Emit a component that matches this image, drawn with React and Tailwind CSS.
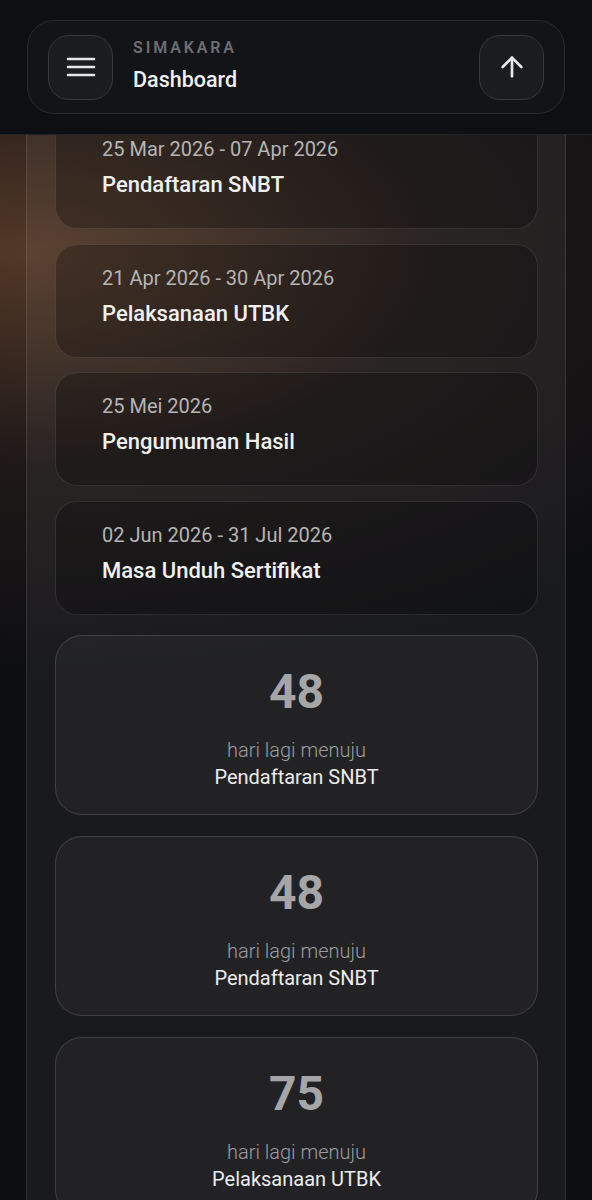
import React from 'react';
import { ArrowUp } from 'lucide-react';

const timeline = [
    { date: '25 Mar 2026 - 07 Apr 2026', title: 'Pendaftaran SNBT' },
    { date: '21 Apr 2026 - 30 Apr 2026', title: 'Pelaksanaan UTBK' },
    { date: '25 Mei 2026', title: 'Pengumuman Hasil' },
    { date: '02 Jun 2026 - 31 Jul 2026', title: 'Masa Unduh Sertifikat' },
];

const countdowns = [
    { days: 48, title: 'Pendaftaran SNBT' },
    { days: 48, title: 'Pendaftaran SNBT' },
    { days: 75, title: 'Pelaksanaan UTBK' },
];

const MenuIcon = () => (
    <svg width="30" height="24" viewBox="0 0 30 24" fill="none" stroke="#e6e6e8" strokeWidth="2.6" strokeLinecap="round">
        <path d="M2 4h26" />
        <path d="M2 12h26" />
        <path d="M2 20h26" />
    </svg>
);

const App = () => {
    return (
        <div className="relative min-h-screen bg-[#0d0e11] font-['Roboto',sans-serif] overflow-hidden">
            {/* Background glow */}
            <div className="absolute inset-0 bg-[radial-gradient(ellipse_140%_34%_at_5%_20%,rgba(112,74,48,0.7),rgba(70,48,40,0.3)_50%,transparent)]"></div>

            {/* Header */}
            <header className="fixed top-0 inset-x-0 z-10 bg-[#0e0f12] border-b border-[#232428] px-[27px] py-[20px]">
                <div className="h-[94px] flex items-center justify-between rounded-[27px] border border-[#2a2b30] bg-[#131418] px-[20px]">
                    <div className="flex items-center gap-[20px]">
                        <button className="w-[65px] h-[65px] rounded-[21px] border border-[#37383d] bg-[#1b1c20] flex items-center justify-center">
                            <MenuIcon />
                        </button>
                        <div className="mb-[2px]">
                            <p className="text-[16px] leading-[20px] font-semibold tracking-[0.18em] text-[#6c6e74]">SIMAKARA</p>
                            <h1 className="mt-[8px] text-[21.5px] leading-[28px] font-medium text-[#f2f2f4]">Dashboard</h1>
                        </div>
                    </div>
                    <button className="w-[65px] h-[65px] rounded-[21px] border border-[#37383d] bg-[#1b1c20] flex items-center justify-center text-[#e6e6e8]">
                        <ArrowUp size={32} strokeWidth={2} />
                    </button>
                </div>
            </header>

            {/* Panel */}
            <main className="relative mx-[26px] border-x border-white/10 bg-white/[0.05] pt-[115px] pb-10 pl-[28px] pr-[27px]">
                <div className="flex flex-col gap-[14.5px]">
                    {timeline.map((item, i) => (
                        <div key={i} className="h-[114px] rounded-[22px] border border-white/10 bg-black/25 pl-[46px] pt-[19px]">
                            <p className="text-[20px] leading-[28px] text-[#b5b4b6]">{item.date}</p>
                            <p className="mt-[8px] text-[22px] leading-[28px] font-medium text-[#f1f1f2]">{item.title}</p>
                        </div>
                    ))}
                </div>

                <div className="mt-[20px] flex flex-col gap-[21px]">
                    {countdowns.map((c, i) => (
                        <div key={i} className="rounded-[27px] border border-white/[0.13] bg-white/[0.04] pt-[32px] pb-[23px] text-center">
                            <p className="text-[48px] leading-[48px] font-bold text-[#a6a6a9]">{c.days}</p>
                            <p className="mt-[21px] text-[20px] leading-[27px] font-light text-[#9c9ca0]">hari lagi menuju</p>
                            <p className="text-[20px] leading-[27px] text-[#ececee]">{c.title}</p>
                        </div>
                    ))}
                </div>
            </main>
        </div>
    );
};

export default App;
